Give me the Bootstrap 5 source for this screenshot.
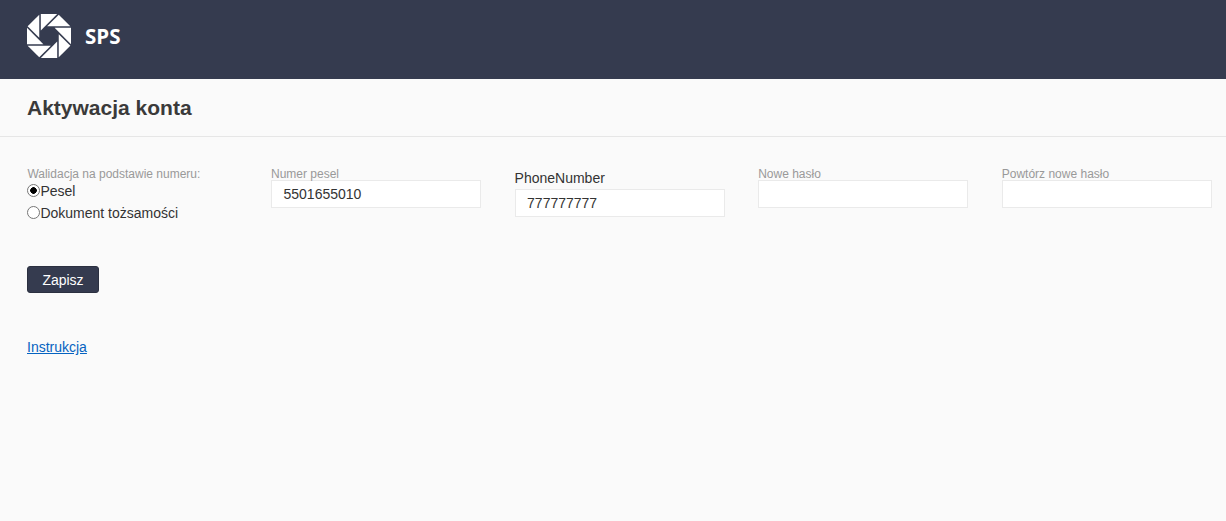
<!DOCTYPE html>
<html lang="pl">
<head>
<meta charset="utf-8">
<title>Aktywacja konta</title>
<link href="https://cdn.jsdelivr.net/npm/bootstrap@5.3.0/dist/css/bootstrap.min.css" rel="stylesheet">
<style>
html,body{height:100%}
body{background:#fafafa;color:#333;font-family:"Liberation Sans",Arial,sans-serif;font-size:14px;overflow:hidden}
.top-bar{height:79px;background:#353b4f;padding:14px 0 0 27px}
.brand-name{font-family:"Open Sans","Noto Sans",sans-serif;font-weight:700;font-size:20.5px;color:#fff;line-height:44px;margin-left:14px}
.page-title{font-size:21px;font-weight:700;color:#3a3a3a;margin:0;line-height:23px;padding:17px 0 17px 27px;border-bottom:1px solid #e6e6e6}
.fields{padding:31px 0 0 27.4px;width:1245px}
.field-col{flex:0 0 243.6px;width:243.6px}
.field-cap{display:block;font-size:12px;line-height:12px;color:#999;margin:0}
.field-cap-lg{display:block;font-size:14px;line-height:16px;color:#333;margin:2px 0 3px}
.field-box{display:block;width:210px;height:28px;border:1px solid #eaeaea;background:#fff;border-radius:0;padding:0 11.5px;font-size:14px;color:#333;font-family:inherit;outline:0}
.choice{display:flex;align-items:center;height:22px;line-height:16px;color:#333;margin:0}
.choice input{appearance:none;margin:0 0 2px;width:13px;height:13px;border:1px solid #767676;border-radius:50%;background:#fff;flex:none}
.choice input:checked{background:radial-gradient(circle,#000 0,#000 3px,#fff 3.6px)}
.save-btn{background:#353b4f;border:1px solid #2b3040;color:#fff;font-size:14px;line-height:16px;width:72px;height:27px;padding:0;border-radius:3px;margin:42px 0 0 27px;display:block}
.save-btn:hover{background:#353b4f;color:#fff}
.doc-link{display:inline-block;margin:46px 0 0 27px;color:#0563c1;line-height:16px}
</style>
</head>
<body>
<header class="top-bar d-flex align-items-start">
<svg width="44" height="44" viewBox="0 0 44 44" aria-label="SPS">
<defs><polygon id="blade" points="13.8,0 30.2,0 13.8,16.4" fill="#fff"/></defs>
<use href="#blade"/>
<use href="#blade" transform="rotate(45 22 22)"/>
<use href="#blade" transform="rotate(90 22 22)"/>
<use href="#blade" transform="rotate(135 22 22)"/>
<use href="#blade" transform="rotate(180 22 22)"/>
<use href="#blade" transform="rotate(225 22 22)"/>
<use href="#blade" transform="rotate(270 22 22)"/>
<use href="#blade" transform="rotate(315 22 22)"/>
</svg>
<span class="brand-name">SPS</span>
</header>
<h1 class="page-title">Aktywacja konta</h1>
<form>
<div class="fields d-flex">
<div class="field-col">
<span class="field-cap">Walidacja na podstawie numeru:</span>
<label class="choice"><input type="radio" name="v" checked>Pesel</label>
<label class="choice"><input type="radio" name="v">Dokument tożsamości</label>
</div>
<div class="field-col">
<label class="field-cap">Numer pesel</label>
<input class="field-box" type="text" value="5501655010">
</div>
<div class="field-col">
<label class="field-cap-lg">PhoneNumber</label>
<input class="field-box" type="text" value="777777777">
</div>
<div class="field-col">
<label class="field-cap">Nowe hasło</label>
<input class="field-box" type="password">
</div>
<div class="field-col">
<label class="field-cap">Powtórz nowe hasło</label>
<input class="field-box" type="password">
</div>
</div>
<button type="button" class="btn save-btn">Zapisz</button>
</form>
<a class="doc-link" href="#">Instrukcja</a>
<script src="https://cdn.jsdelivr.net/npm/bootstrap@5.3.0/dist/js/bootstrap.bundle.min.js"></script>
</body>
</html>
